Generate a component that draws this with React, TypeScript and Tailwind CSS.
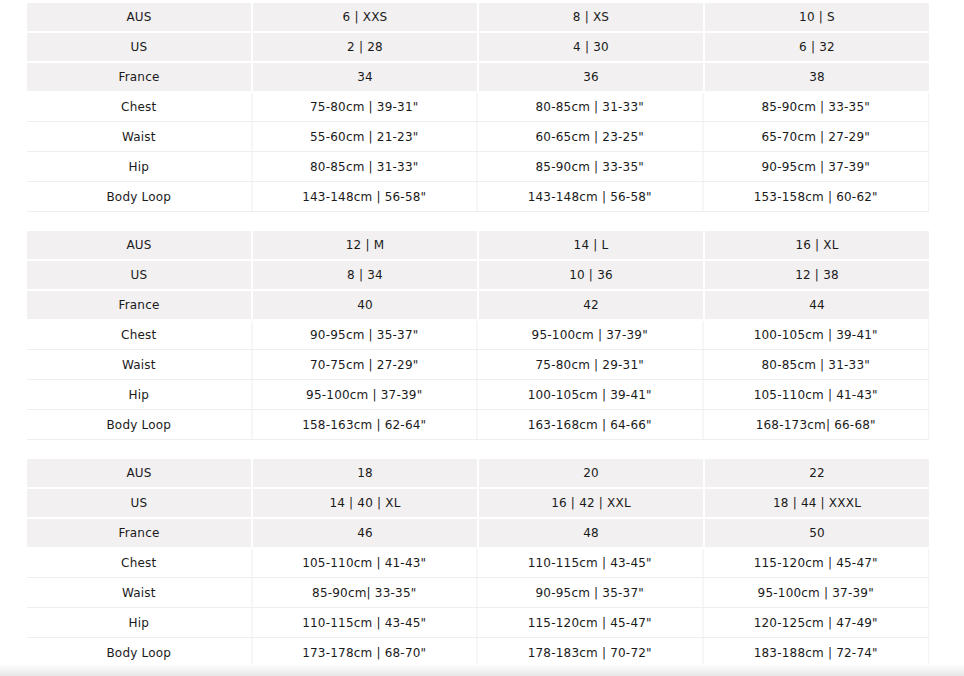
const tables = [
  {
    sizes: [
      ["AUS", "6 | XXS", "8 | XS", "10 | S"],
      ["US", "2 | 28", "4 | 30", "6 | 32"],
      ["France", "34", "36", "38"],
    ],
    body: [
      ["Chest", "75-80cm | 39-31\"", "80-85cm | 31-33\"", "85-90cm | 33-35\""],
      ["Waist", "55-60cm | 21-23\"", "60-65cm | 23-25\"", "65-70cm | 27-29\""],
      ["Hip", "80-85cm | 31-33\"", "85-90cm | 33-35\"", "90-95cm | 37-39\""],
      ["Body Loop", "143-148cm | 56-58\"", "143-148cm | 56-58\"", "153-158cm | 60-62\""],
    ],
  },
  {
    sizes: [
      ["AUS", "12 | M", "14 | L", "16 | XL"],
      ["US", "8 | 34", "10 | 36", "12 | 38"],
      ["France", "40", "42", "44"],
    ],
    body: [
      ["Chest", "90-95cm | 35-37\"", "95-100cm | 37-39\"", "100-105cm | 39-41\""],
      ["Waist", "70-75cm | 27-29\"", "75-80cm | 29-31\"", "80-85cm | 31-33\""],
      ["Hip", "95-100cm | 37-39\"", "100-105cm | 39-41\"", "105-110cm | 41-43\""],
      ["Body Loop", "158-163cm | 62-64\"", "163-168cm | 64-66\"", "168-173cm| 66-68\""],
    ],
  },
  {
    sizes: [
      ["AUS", "18", "20", "22"],
      ["US", "14 | 40 | XL", "16 | 42 | XXL", "18 | 44 | XXXL"],
      ["France", "46", "48", "50"],
    ],
    body: [
      ["Chest", "105-110cm | 41-43\"", "110-115cm | 43-45\"", "115-120cm | 45-47\""],
      ["Waist", "85-90cm| 33-35\"", "90-95cm | 35-37\"", "95-100cm | 37-39\""],
      ["Hip", "110-115cm | 43-45\"", "115-120cm | 45-47\"", "120-125cm | 47-49\""],
      ["Body Loop", "173-178cm | 68-70\"", "178-183cm | 70-72\"", "183-188cm | 72-74\""],
    ],
  },
]

function SizeTable({ sizes, body }: { sizes: string[][]; body: string[][] }) {
  return (
    <div className="flex flex-col gap-[2px]">
      {sizes.map((row, i) => (
        <div key={i} className="grid grid-cols-4 gap-[2px]">
          {row.map((cell, j) => (
            <div key={j} className="h-[28px] flex items-center justify-center bg-[#f2f0f1]">
              {cell}
            </div>
          ))}
        </div>
      ))}
      <div className="flex flex-col">
        {body.map((row, i) => (
          <div key={i} className="grid grid-cols-4 border-b border-[#efefef]">
            {row.map((cell, j) => (
              <div
                key={j}
                className={
                  "flex items-center justify-center " +
                  (i === 0 ? "h-[28px] " : "h-[29px] ") +
                  (j < 3 ? "border-r-2 border-[#f6f6f6]" : "border-r border-[#f3f3f3]")
                }
              >
                {cell}
              </div>
            ))}
          </div>
        ))}
      </div>
    </div>
  )
}

export default function App() {
  return (
    <div
      className="w-[964px] h-[676px] bg-white overflow-hidden relative text-[12px] text-[#1a1a1a] tracking-[0.2px]"
      style={{ fontFamily: '"DejaVu Sans", sans-serif' }}
    >
      <div className="pt-[3px] pl-[27px] w-[929px] flex flex-col gap-[19px]">
        {tables.map((t, i) => (
          <SizeTable key={i} sizes={t.sizes} body={t.body} />
        ))}
      </div>
      <div className="absolute left-0 right-0 bottom-0 h-[12px] bg-gradient-to-b from-white to-[#e6e6e6]" />
    </div>
  )
}
